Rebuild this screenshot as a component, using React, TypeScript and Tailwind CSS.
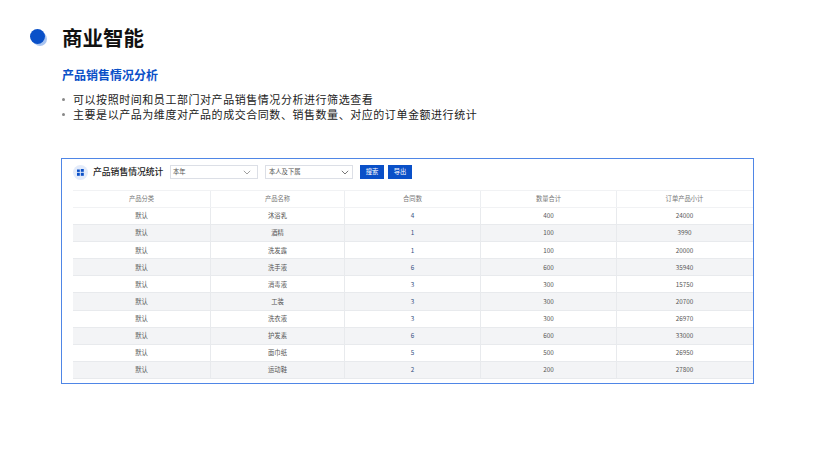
const F = '"Noto Sans CJK SC", sans-serif';

const rows: [string, string, string, string, string][] = [
  ["默认", "沐浴乳", "4", "400", "24000"],
  ["默认", "酒精", "1", "100", "3990"],
  ["默认", "洗发露", "1", "100", "20000"],
  ["默认", "洗手液", "6", "600", "35940"],
  ["默认", "消毒液", "3", "300", "15750"],
  ["默认", "工装", "3", "300", "20700"],
  ["默认", "洗衣液", "3", "300", "26970"],
  ["默认", "护发素", "6", "600", "33000"],
  ["默认", "面巾纸", "5", "500", "26950"],
  ["默认", "运动鞋", "2", "200", "27800"],
];
const heads = ["产品分类", "产品名称", "合同数", "数量合计", "订单产品小计"];
const grid = "grid grid-cols-[138px_134px_136px_136px_135px]";

function Chevron({ dark }: { dark?: boolean }) {
  return (
    <svg width="8" height="5" viewBox="0 0 8 5" fill="none" stroke={dark ? "#555" : "#888"} strokeWidth="0.8">
      <path d="M0.8 0.8 L4 4 L7.2 0.8" />
    </svg>
  );
}

export default function App() {
  return (
    <div className="w-[820px] h-[461px] bg-white overflow-hidden" style={{ fontFamily: F }}>
      <div className="flex items-center pl-[30px] pt-[23px] h-[53px]">
        <div className="relative w-[16px] h-[16px] mr-[16px] mt-[-2px]">
          <div className="absolute left-[3px] top-[3px] w-[14px] h-[14px] rounded-full bg-[#a9c4f0]" />
          <div className="absolute left-0 top-0 w-[15px] h-[15px] rounded-full bg-[#0a50c8]" />
        </div>
        <div className="text-[20.5px] leading-[30px] font-bold text-[#111] mt-[-2px]">商业智能</div>
      </div>
      <div className="pl-[62px] pt-[12px] text-[12px] leading-[20px] font-bold text-[#0a50c8]">产品销售情况分析</div>
      <div className="pl-[62px] pt-[7px] text-[11px] leading-[15px] text-[#222]">
        <div className="flex items-center">
          <span className="w-[3px] h-[3px] rounded-full bg-[#888] mr-[8px]" />
          <span className="tracking-[0.55px]">可以按照时间和员工部门对产品销售情况分析进行筛选查看</span>
        </div>
        <div className="flex items-center">
          <span className="w-[3px] h-[3px] rounded-full bg-[#888] mr-[8px]" />
          <span className="tracking-[0.55px]">主要是以产品为维度对产品的成交合同数、销售数量、对应的订单金额进行统计</span>
        </div>
      </div>
      <div className="ml-[61px] mt-[36px] w-[693px] h-[226px] border border-[#4f86e6] pl-[11px] bg-white">
        <div className="flex items-center h-[31px] pb-[5px]">
          <div className="w-[15px] h-[15px] rounded-full bg-[#e3ebfa] flex items-center justify-center mr-[5px]">
            <svg width="7" height="7" viewBox="0 0 7 7" fill="#0a50c8">
              <rect x="0" y="0.5" width="2.8" height="2.4" />
              <rect x="3.8" y="0" width="3" height="2.8" />
              <rect x="0" y="3.8" width="2.8" height="3" />
              <rect x="3.8" y="3.8" width="3" height="3" />
            </svg>
          </div>
          <div className="text-[8.8px] font-medium text-[#222] w-[77px] whitespace-nowrap">产品销售情况统计</div>
          <div className="w-[88px] h-[14px] border border-[#dcdfe6] flex items-center justify-between pl-[2px] pr-[6px] text-[6.3px] text-[#555] mr-[7px]">
            <span>本年</span>
            <Chevron />
          </div>
          <div className="w-[88px] h-[14px] border border-[#dcdfe6] flex items-center justify-between pl-[3px] pr-[3px] text-[6.3px] text-[#555] mr-[7px]">
            <span>本人及下属</span>
            <Chevron dark />
          </div>
          <div className="w-[24px] h-[14px] bg-[#0a50c8] text-white text-[6.3px] flex items-center justify-center mr-[4px]">搜索</div>
          <div className="w-[24px] h-[14px] bg-[#0a50c8] text-white text-[6.3px] flex items-center justify-center">导出</div>
        </div>
        <div className={`${grid} h-[18px] border-t border-[#f1f2f4] border-b text-[6.3px] text-[#777]`}>
          {heads.map((h, i) => (
            <div key={h} className={`flex items-center justify-center ${i < 4 ? "border-r border-[#eceef1]" : ""}`}>{h}</div>
          ))}
        </div>
        {rows.map((r, ri) => (
          <div key={r[1]} className={`${grid} h-[17.1px] border-b border-[#e8eaed] text-[6.3px] text-[#555] ${ri % 2 ? "bg-[#f3f4f6]" : "bg-white"}`}>
            {r.map((c, i) => (
              <div key={i} className={`flex items-center justify-center ${i < 4 ? "border-r border-[#e8eaed]" : ""} ${i === 2 ? "text-[#33507e]" : ""}`}>{c}</div>
            ))}
          </div>
        ))}
      </div>
    </div>
  );
}
